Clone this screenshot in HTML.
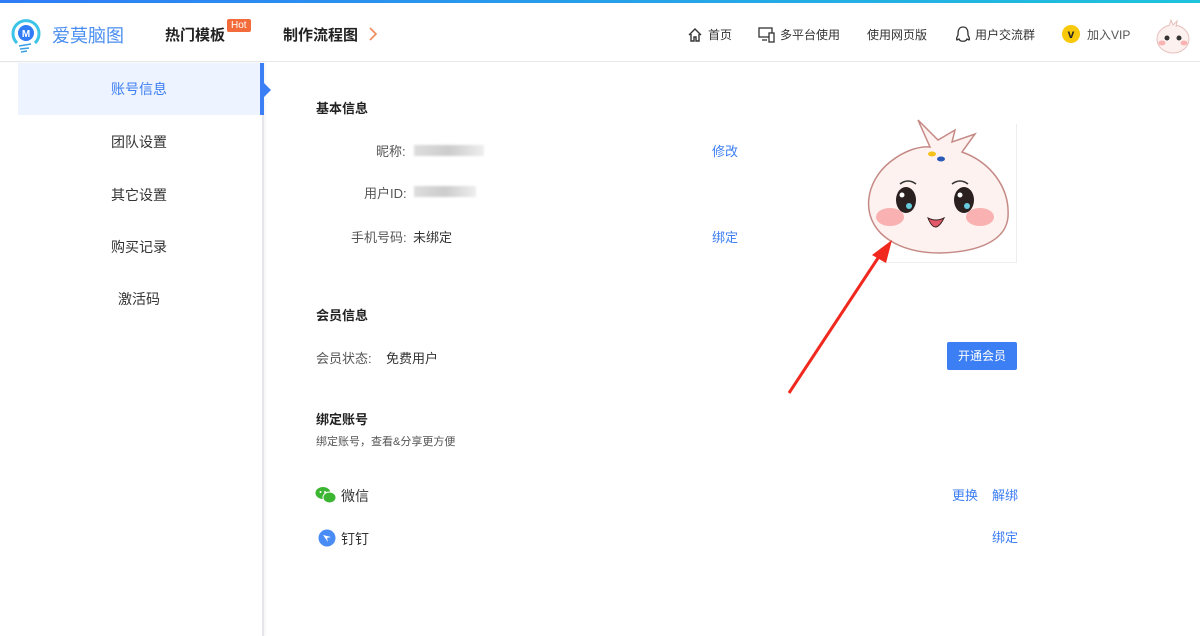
<!DOCTYPE html>
<html><head><meta charset="utf-8"><style>
*{margin:0;padding:0;box-sizing:border-box}
body{width:1200px;height:636px;overflow:hidden;background:#fff;font-family:"Liberation Sans","Noto Sans CJK SC",sans-serif;color:#333;position:relative}
.top{position:absolute;left:0;top:0;width:1200px;height:3px;background:linear-gradient(90deg,#2f7cf6,#1ec3dc)}
.hdr{position:absolute;top:3px;left:0;width:1200px;height:59px;border-bottom:1px solid #e8e8e8}
.a{position:absolute;white-space:nowrap}
.side{position:absolute;left:0;top:63px;width:264px;height:573px;border-right:2px solid #e4e6ea;box-shadow:1px 0 3px rgba(0,0,0,.06)}
.si{position:absolute;left:18px;width:242px;height:52px;line-height:52px;text-align:center;font-size:14px;color:#333}
.lbl{font-size:13px;color:#555}
.blur{position:absolute;height:11px;background:linear-gradient(90deg,#ddd,#ccc 50%,#eee);filter:blur(1px)}
.lnk{color:#3c7ef3;font-size:13px}
h4{font-size:13px;font-weight:bold;color:#222}
</style></head><body>
<div class="top"></div>
<div class="hdr">
<svg class="a" style="left:9px;top:14px" width="34" height="38" viewBox="0 0 34 38"><path d="M8 26 A13 13 0 1 1 26 26" fill="none" stroke="#3ec3e8" stroke-width="3"/><circle cx="17" cy="16" r="8" fill="#2f7cf6"/><text x="17" y="20" font-size="10" font-weight="bold" fill="#fff" text-anchor="middle" font-family="Liberation Sans">M</text><path d="M10 29 L22 27 M11 32 L20 31 M12 35 L18 34" stroke="#3a9ee8" stroke-width="1.5"/></svg>
<div class="a" style="left:52px;top:19px;font-size:18px;color:#4a8ef0">爱莫脑图</div>
<div class="a" style="left:165px;top:21px;font-size:15px;font-weight:bold;color:#222">热门模板</div>
<div class="a" style="left:227px;top:16px;background:#f46b3b;color:#fff;font-size:10px;padding:0 4px;line-height:13px;border-radius:2px">Hot</div>
<div class="a" style="left:283px;top:21px;font-size:15px;font-weight:bold;color:#222">制作流程图</div>
<svg class="a" style="left:368px;top:24px" width="10" height="14" viewBox="0 0 10 14"><path d="M2 1 L8 7 L2 13" fill="none" stroke="#f08a5a" stroke-width="1.6"/></svg>
<svg class="a" style="left:687px;top:24px" width="16" height="16" viewBox="0 0 16 16"><path d="M2 8 L8 2 L14 8 M4 7 V14 H7 V10 H9 V14 H12 V7" fill="none" stroke="#333" stroke-width="1.4"/></svg>
<div class="a" style="left:708px;top:23px;font-size:12px">首页</div>
<svg class="a" style="left:758px;top:23px" width="18" height="17" viewBox="0 0 18 17"><rect x="1" y="2" width="13" height="9" fill="none" stroke="#333" stroke-width="1.3"/><path d="M4 14 H9" stroke="#333" stroke-width="1.3"/><rect x="11" y="7" width="5" height="9" fill="#fff" stroke="#333" stroke-width="1.3"/></svg>
<div class="a" style="left:780px;top:23px;font-size:12px">多平台使用</div>
<div class="a" style="left:867px;top:23px;font-size:12px">使用网页版</div>
<svg class="a" style="left:955px;top:23px" width="16" height="18" viewBox="0 0 16 18"><path d="M8 1 C3 1 3 6 3 9 C2 11 1 13 2 14 L4 13 C5 16 11 16 12 13 L14 14 C15 13 14 11 13 9 C13 6 13 1 8 1Z" fill="none" stroke="#333" stroke-width="1.3"/></svg>
<div class="a" style="left:975px;top:23px;font-size:12px">用户交流群</div>
<div class="a" style="left:1062px;top:22px;width:18px;height:18px;border-radius:50%;background:#f8c80a;color:#222;font-size:12px;font-weight:bold;text-align:center;line-height:18px">v</div>
<div class="a" style="left:1087px;top:23px;font-size:12px;color:#555">加入VIP</div>
<svg class="a" style="left:1155px;top:14px" width="36" height="38" viewBox="0 0 36 38"><ellipse cx="18" cy="22" rx="16" ry="14" fill="#fdf1ef" stroke="#e4c0bc"/><path d="M14 9 L16 3 L18 8 L22 4 L21 10" fill="#fdf1ef" stroke="#e4c0bc"/><circle cx="12" cy="21" r="2.5" fill="#333"/><circle cx="24" cy="21" r="2.5" fill="#333"/><ellipse cx="7" cy="26" rx="3.5" ry="2.5" fill="#f9b3b3"/><ellipse cx="29" cy="26" rx="3.5" ry="2.5" fill="#f9b3b3"/></svg>
</div>
<div class="side">
<div class="si" style="top:0;background:#eef4ff;color:#3c7ef3">账号信息</div>
<div class="a" style="left:260px;top:0;width:4px;height:52px;background:#3c7ef3"></div>
<div class="a" style="left:264px;top:20px;width:0;height:0;border-left:7px solid #3c7ef3;border-top:7px solid transparent;border-bottom:7px solid transparent"></div>
<div class="si" style="top:53px">团队设置</div>
<div class="si" style="top:106px">其它设置</div>
<div class="si" style="top:158px">购买记录</div>
<div class="si" style="top:210px">激活码</div>
</div>
<h4 class="a" style="left:316px;top:98px">基本信息</h4>
<div class="a lbl" style="left:376px;top:141px">昵称:</div><div class="blur" style="left:414px;top:145px;width:70px"></div>
<div class="a lbl" style="left:364px;top:183px">用户ID:</div><div class="blur" style="left:414px;top:186px;width:62px"></div>
<div class="a lbl" style="left:351px;top:227px">手机号码:</div><div class="a" style="left:413px;top:227px;font-size:13px">未绑定</div>
<div class="a lbl lnk" style="left:712px;top:141px;color:#3c7ef3">修改</div>
<div class="a lbl lnk" style="left:712px;top:227px;color:#3c7ef3">绑定</div>
<div class="a" style="left:880px;top:124px;width:137px;height:139px;border:1px solid #eee;border-left:none;border-top:none"></div>
<svg class="a" style="left:860px;top:112px" width="160" height="150" viewBox="0 0 160 150"><path d="M25 125 C0 105 5 70 30 50 C45 38 60 34 70 35 L58 8 L78 28 L95 18 L92 30 L115 22 L102 40 C130 50 150 75 148 105 C146 128 120 140 80 141 C55 141 38 135 25 125Z" fill="#fdf2ef" stroke="#c58a86" stroke-width="1.5"/><path d="M40 72 Q48 66 56 72 M92 72 Q100 66 108 72" fill="none" stroke="#333" stroke-width="1.5"/><ellipse cx="46" cy="88" rx="10" ry="13" fill="#2a2020"/><ellipse cx="104" cy="88" rx="10" ry="13" fill="#2a2020"/><circle cx="42" cy="83" r="2.5" fill="#fff"/><circle cx="100" cy="83" r="2.5" fill="#fff"/><circle cx="49" cy="94" r="3" fill="#6cd"/><circle cx="107" cy="94" r="3" fill="#6cd"/><ellipse cx="30" cy="105" rx="14" ry="9" fill="#f9b1b1"/><ellipse cx="120" cy="105" rx="14" ry="9" fill="#f9b1b1"/><path d="M68 106 Q75 124 84 106 Q76 110 68 106 Z" fill="#e25a6a" stroke="#3a2222"/><ellipse cx="72" cy="42" rx="4" ry="2.5" fill="#f5c21a"/><ellipse cx="81" cy="47" rx="4" ry="2.5" fill="#2a5ab8"/></svg>
<svg class="a" style="left:780px;top:235px" width="120" height="165" viewBox="0 0 120 165"><path d="M9 158 L100 20" stroke="#f0281e" stroke-width="3"/><path d="M112 5 L92 20 L106 28 Z" fill="#f0281e"/></svg>
<h4 class="a" style="left:316px;top:305px">会员信息</h4>
<div class="a lbl" style="left:316px;top:348px">会员状态:</div>
<div class="a" style="left:386px;top:348px;font-size:13px">免费用户</div>
<div class="a" style="left:947px;top:342px;width:70px;height:28px;background:#3c7ef3;color:#fff;font-size:12px;text-align:center;line-height:28px;border-radius:2px">开通会员</div>
<h4 class="a" style="left:316px;top:409px">绑定账号</h4>
<div class="a" style="left:316px;top:433px;font-size:11px;color:#555">绑定账号，查看&amp;分享更方便</div>
<svg class="a" style="left:315px;top:486px" width="22" height="18" viewBox="0 0 22 18"><ellipse cx="8" cy="7" rx="7.5" ry="6" fill="#3bb532"/><ellipse cx="14.5" cy="11.5" rx="6.5" ry="5.5" fill="#3bb532" stroke="#fff" stroke-width="1"/><circle cx="5.5" cy="6" r="1" fill="#fff"/><circle cx="10" cy="6" r="1" fill="#fff"/></svg>
<div class="a" style="left:341px;top:486px;font-size:14px">微信</div>
<div class="a lnk" style="left:952px;top:485px">更换</div><div class="a lnk" style="left:992px;top:485px">解绑</div>
<svg class="a" style="left:318px;top:529px" width="18" height="18" viewBox="0 0 18 18"><circle cx="9" cy="9" r="8.5" fill="#4a8cf6"/><path d="M5 6 L13 8 L9 9 L10 13 Z" fill="#fff"/></svg>
<div class="a" style="left:341px;top:529px;font-size:14px">钉钉</div>
<div class="a lnk" style="left:992px;top:527px">绑定</div>
</body></html>
